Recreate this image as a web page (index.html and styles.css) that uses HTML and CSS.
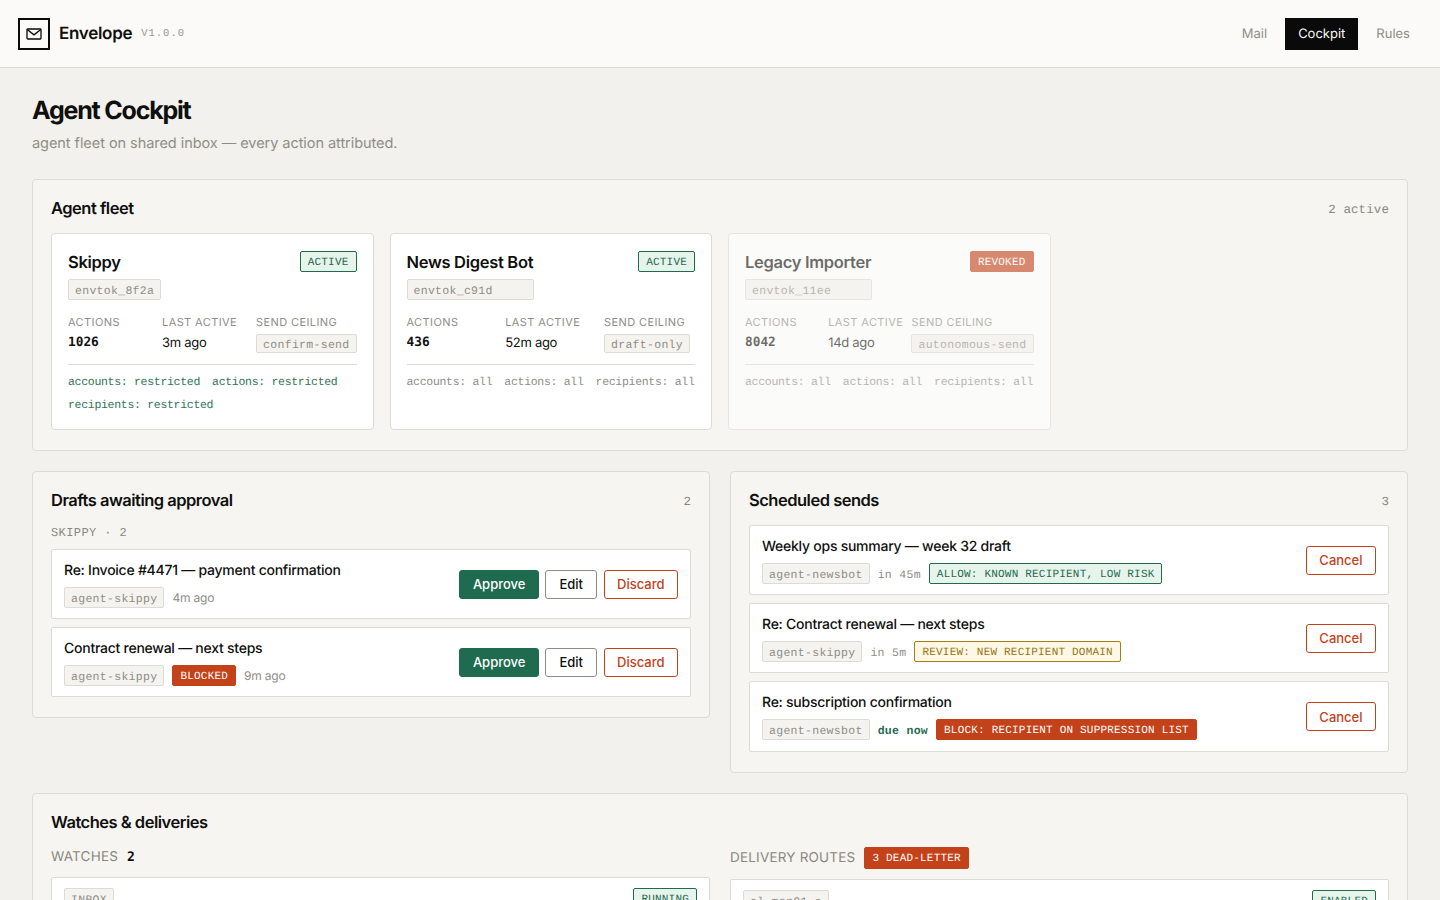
FILE: index.html
```html
<!DOCTYPE html>
<html>
<head>
    <title>Envelope - Agent Cockpit</title>
    <link rel="stylesheet" href="styles.css">
</head>
<body>
    <header class="topbar">
        <div class="brand">
            <div class="logo">
                <svg width="16" height="12" viewBox="0 0 16 12" fill="none" stroke="#0a0a0a" stroke-width="1.3">
                    <rect x="1" y="1" width="14" height="10" rx="0.8"/>
                    <path d="M1.2 1.4 L8 6.8 L14.8 1.4"/>
                </svg>
            </div>
            <span class="brand-name">Envelope</span>
            <span class="version">V1.0.0</span>
        </div>
        <nav class="nav">
            <a class="nav-link">Mail</a>
            <a class="nav-link active">Cockpit</a>
            <a class="nav-link">Rules</a>
        </nav>
    </header>

    <main class="page">
        <h1>Agent Cockpit</h1>
        <p class="subtitle">agent fleet on shared inbox — every action attributed.</p>

        <section class="panel">
            <div class="panel-head">
                <h2>Agent fleet</h2>
                <span class="count">2 active</span>
            </div>
            <div class="fleet">
                <div class="agent">
                    <div class="agent-top">
                        <h3>Skippy</h3>
                        <span class="badge green">ACTIVE</span>
                    </div>
                    <div class="token"><span class="chip">envtok_8f2a</span></div>
                    <div class="stats">
                        <div><div class="label">Actions</div><div class="num">1026</div></div>
                        <div><div class="label">Last active</div><div class="val">3m ago</div></div>
                        <div><div class="label">Send ceiling</div><span class="chip">confirm-send</span></div>
                    </div>
                    <div class="scopes restricted">
                        <span>accounts: restricted</span>
                        <span>actions: restricted</span>
                        <span>recipients: restricted</span>
                    </div>
                </div>

                <div class="agent">
                    <div class="agent-top">
                        <h3>News Digest Bot</h3>
                        <span class="badge green">ACTIVE</span>
                    </div>
                    <div class="token"><span class="chip wide">envtok_c91d</span></div>
                    <div class="stats">
                        <div><div class="label">Actions</div><div class="num">436</div></div>
                        <div><div class="label">Last active</div><div class="val">52m ago</div></div>
                        <div class="ceiling"><div class="label">Send ceiling</div><span class="chip">draft-only</span></div>
                    </div>
                    <div class="scopes">
                        <span>accounts: all</span>
                        <span>actions: all</span>
                        <span>recipients: all</span>
                    </div>
                </div>

                <div class="agent revoked">
                    <div class="agent-top">
                        <h3>Legacy Importer</h3>
                        <span class="badge red">REVOKED</span>
                    </div>
                    <div class="token"><span class="chip wide">envtok_11ee</span></div>
                    <div class="stats">
                        <div><div class="label">Actions</div><div class="num">8042</div></div>
                        <div><div class="label">Last active</div><div class="val">14d ago</div></div>
                        <div><div class="label">Send ceiling</div><span class="chip">autonomous-send</span></div>
                    </div>
                    <div class="scopes">
                        <span>accounts: all</span>
                        <span>actions: all</span>
                        <span>recipients: all</span>
                    </div>
                </div>
            </div>
        </section>

        <div class="columns">
            <section class="panel">
                <div class="panel-head">
                    <h2>Drafts awaiting approval</h2>
                    <span class="count">2</span>
                </div>
                <div class="group-label">SKIPPY · 2</div>
                <div class="rows">
                    <div class="row">
                        <div class="row-main">
                            <div class="row-title">Re: Invoice #4471 — payment confirmation</div>
                            <div class="row-meta">
                                <span class="chip">agent-skippy</span>
                                <span class="time">4m ago</span>
                            </div>
                        </div>
                        <div class="actions">
                            <button class="btn approve">Approve</button>
                            <button class="btn">Edit</button>
                            <button class="btn danger">Discard</button>
                        </div>
                    </div>
                    <div class="row">
                        <div class="row-main">
                            <div class="row-title">Contract renewal — next steps</div>
                            <div class="row-meta">
                                <span class="chip">agent-skippy</span>
                                <span class="badge red">BLOCKED</span>
                                <span class="time">9m ago</span>
                            </div>
                        </div>
                        <div class="actions">
                            <button class="btn approve">Approve</button>
                            <button class="btn">Edit</button>
                            <button class="btn danger">Discard</button>
                        </div>
                    </div>
                </div>
            </section>

            <section class="panel">
                <div class="panel-head">
                    <h2>Scheduled sends</h2>
                    <span class="count">3</span>
                </div>
                <div class="rows sched">
                    <div class="row">
                        <div class="row-main">
                            <div class="row-title">Weekly ops summary — week 32 draft</div>
                            <div class="row-meta">
                                <span class="chip">agent-newsbot</span>
                                <span class="when">in 45m</span>
                                <span class="badge green">ALLOW: KNOWN RECIPIENT, LOW RISK</span>
                            </div>
                        </div>
                        <button class="btn danger">Cancel</button>
                    </div>
                    <div class="row">
                        <div class="row-main">
                            <div class="row-title">Re: Contract renewal — next steps</div>
                            <div class="row-meta">
                                <span class="chip">agent-skippy</span>
                                <span class="when">in 5m</span>
                                <span class="badge amber">REVIEW: NEW RECIPIENT DOMAIN</span>
                            </div>
                        </div>
                        <button class="btn danger">Cancel</button>
                    </div>
                    <div class="row">
                        <div class="row-main">
                            <div class="row-title">Re: subscription confirmation</div>
                            <div class="row-meta">
                                <span class="chip">agent-newsbot</span>
                                <span class="when due">due now</span>
                                <span class="badge red">BLOCK: RECIPIENT ON SUPPRESSION LIST</span>
                            </div>
                        </div>
                        <button class="btn danger">Cancel</button>
                    </div>
                </div>
            </section>
        </div>

        <section class="panel">
            <div class="panel-head">
                <h2>Watches &amp; deliveries</h2>
            </div>
            <div class="columns inner">
                <div>
                    <div class="sub-head">
                        <span class="sub-label">WATCHES</span>
                        <span class="sub-num">2</span>
                    </div>
                    <div class="row watch">
                        <span class="chip">INBOX</span>
                        <span class="badge green">RUNNING</span>
                    </div>
                </div>
                <div>
                    <div class="sub-head">
                        <span class="sub-label">DELIVERY ROUTES</span>
                        <span class="badge red">3 DEAD-LETTER</span>
                    </div>
                    <div class="row watch">
                        <span class="chip">el-mon01-a</span>
                        <span class="badge green">ENABLED</span>
                    </div>
                </div>
            </div>
        </section>
    </main>
</body>
</html>
```

FILE: styles.css
```css
* {
    box-sizing: border-box;
}

body {
    margin: 0;
    background-color: #f2f1ed;
    color: #0f0f0e;
    font-family: Inter, "Noto Sans", sans-serif;
    text-rendering: geometricPrecision;
}

h1, h2, h3, p {
    margin: 0;
}

.topbar {
    display: flex;
    justify-content: space-between;
    align-items: center;
    height: 68px;
    padding: 0 18px 0 18px;
    background-color: #fbfaf8;
    border-bottom: 1px solid #dddbd5;
}

.brand {
    display: flex;
    align-items: center;
}

.logo {
    display: flex;
    align-items: center;
    justify-content: center;
    width: 32px;
    height: 32px;
    border: 2px solid #0a0a0a;
}

.brand-name {
    margin-left: 9px;
    font-size: 17px;
    font-weight: 600;
    letter-spacing: -0.3px;
}

.version {
    margin-left: 9px;
    padding-top: 1px;
    font-family: "Liberation Mono", monospace;
    font-size: 10.5px;
    letter-spacing: 1px;
    color: #9a9891;
}

.nav {
    display: flex;
    gap: 5px;
    margin-right: -1px;
}

.nav-link {
    display: block;
    padding: 0 13px;
    line-height: 32px;
    font-size: 13px;
    color: #8f8d86;
}

.nav-link.active {
    background-color: #0a0a0a;
    color: #fbfaf8;
}

.page {
    padding: 27px 32px 32px;
}

h1 {
    font-size: 25px;
    line-height: 32px;
    font-weight: 700;
    letter-spacing: -1.2px;
}

.subtitle {
    margin-top: 6px;
    margin-bottom: 24px;
    font-size: 14.5px;
    line-height: 22px;
    letter-spacing: -0.05px;
    color: #8f8d86;
}

.panel {
    padding: 18px 18px 20px;
    margin-bottom: 20px;
    background-color: #f6f5f1;
    border: 1px solid #dddbd5;
    border-radius: 4px;
}

.panel-head {
    display: flex;
    justify-content: space-between;
    align-items: flex-start;
    height: 22px;
    margin-bottom: 13px;
}

h2 {
    font-size: 16.5px;
    line-height: 20px;
    font-weight: 600;
    letter-spacing: -0.5px;
}

.count {
    font-family: "Liberation Mono", monospace;
    font-size: 12.5px;
    line-height: 24px;
    letter-spacing: 0.1px;
    color: #8a8880;
}

.fleet {
    display: grid;
    grid-template-columns: repeat(4, 1fr);
    gap: 16px;
}

.agent {
    height: 197px;
    padding: 16px;
    background-color: #fff;
    border: 1px solid #dddbd5;
    border-radius: 4px;
}

.agent.revoked {
    opacity: 0.6;
}

.agent-top {
    display: flex;
    justify-content: space-between;
    align-items: flex-start;
    height: 31px;
    margin-bottom: -3px;
}

.agent-top .badge {
    margin-top: 1px;
}

h3 {
    font-size: 16.5px;
    line-height: 24px;
    font-weight: 600;
    letter-spacing: -0.3px;
}

.badge {
    display: inline-block;
    padding: 0 7px;
    height: 21px;
    line-height: 22px;
    font-family: "Liberation Mono", monospace;
    font-size: 11px;
    letter-spacing: 0.2px;
    white-space: nowrap;
    border: 1px solid;
    border-radius: 2px;
}

.badge.green {
    color: #1f6b4f;
    background-color: #e6f4ec;
    border-color: #1f6b4f;
}

.badge.red {
    color: #fff;
    background-color: #c4421a;
    border-color: #c4421a;
}

.badge.amber {
    color: #9a7410;
    background-color: #fdf8e6;
    border-color: #a67c16;
}

.chip {
    display: inline-block;
    padding: 0 6px;
    height: 21px;
    line-height: 23px;
    font-family: "Liberation Mono", monospace;
    font-size: 11.5px;
    letter-spacing: 0.3px;
    white-space: nowrap;
    color: #8f8d86;
    background-color: #f4f3ef;
    border: 1px solid #dddbd5;
    border-radius: 2px;
}

.chip.wide {
    width: 127px;
}

.token {
    height: 21px;
    margin-bottom: 15px;
}

.stats {
    display: grid;
    grid-template-columns: 1fr 1fr auto;
    padding-bottom: 11px;
    border-bottom: 1px solid #dddbd5;
}

.stats .chip {
    display: block;
    height: 19px;
    margin-top: 4px;
    line-height: 21px;
}

.ceiling {
    min-width: 91px;
}

.ceiling .chip {
    width: fit-content;
}

.label {
    margin-bottom: 3px;
    height: 16px;
    line-height: 16px;
    font-size: 11px;
    letter-spacing: 0.4px;
    text-transform: uppercase;
    color: #8f8d86;
}

.num {
    font-family: "DejaVu Sans Mono", monospace;
    font-size: 12.8px;
    font-weight: 700;
    line-height: 20px;
}

.val {
    font-size: 13px;
    line-height: 20px;
    letter-spacing: -0.3px;
}

.scopes {
    display: flex;
    flex-wrap: wrap;
    column-gap: 12px;
    padding-top: 6px;
    font-family: "Liberation Mono", monospace;
    font-size: 11.5px;
    letter-spacing: -0.3px;
    line-height: 23px;
    color: #8f8d86;
}

.scopes.restricted {
    color: #2f7459;
}

.columns {
    display: grid;
    grid-template-columns: 1fr 1fr;
    gap: 20px;
    align-items: start;
}

.group-label {
    margin-top: 6px;
    margin-bottom: 8px;
    height: 16px;
    line-height: 16px;
    font-family: "Liberation Mono", monospace;
    font-size: 12px;
    letter-spacing: 0.4px;
    color: #8a8880;
}

.rows {
    display: flex;
    flex-direction: column;
    gap: 8px;
}

.rows.sched {
    margin-top: 2px;
}

.rows.sched .row:last-child {
    min-height: 71px;
}

.row {
    display: flex;
    justify-content: space-between;
    align-items: center;
    min-height: 70px;
    padding: 0 12px;
    background-color: #fff;
    border: 1px solid #dddbd5;
    border-radius: 2px;
}

.row-title {
    margin-bottom: 6px;
    font-size: 14px;
    line-height: 20px;
    font-weight: 500;
    letter-spacing: -0.25px;
}

.row-meta {
    display: flex;
    align-items: center;
    gap: 8px;
}

.time {
    font-size: 12px;
    letter-spacing: -0.2px;
    color: #8f8d86;
}

.when {
    padding-top: 4px;
    font-family: "Liberation Mono", monospace;
    font-size: 11.5px;
    letter-spacing: 0.3px;
    color: #8f8d86;
}

.when.due {
    font-weight: 700;
    color: #1f6b4f;
}

.actions {
    display: flex;
    gap: 6.5px;
}

.btn {
    height: 29px;
    padding: 0 13px;
    font-family: inherit;
    font-size: 13px;
    font-weight: 500;
    color: #0f0f0e;
    background-color: #fff;
    border: 1px solid #8f8d86;
    border-radius: 3px;
    cursor: pointer;
}

.btn.approve {
    padding: 0 12.5px;
    color: #fff;
    background-color: #1f6b4f;
    border-color: #1f6b4f;
}

.btn.danger {
    padding: 0 12.5px;
    color: #c4421a;
    border-color: #c4421a;
}

.sub-head {
    display: flex;
    align-items: center;
    gap: 9px;
    min-height: 20px;
    margin-bottom: 10px;
}

.sub-head .badge {
    height: 22px;
    line-height: 23px;
}

.sub-label {
    font-size: 13.5px;
    letter-spacing: 0.2px;
    color: #8a8880;
}

.sub-num {
    font-family: "DejaVu Sans Mono", monospace;
    font-size: 13px;
    font-weight: 700;
}

.watch {
    align-items: flex-start;
    padding-top: 10px;
}
```
